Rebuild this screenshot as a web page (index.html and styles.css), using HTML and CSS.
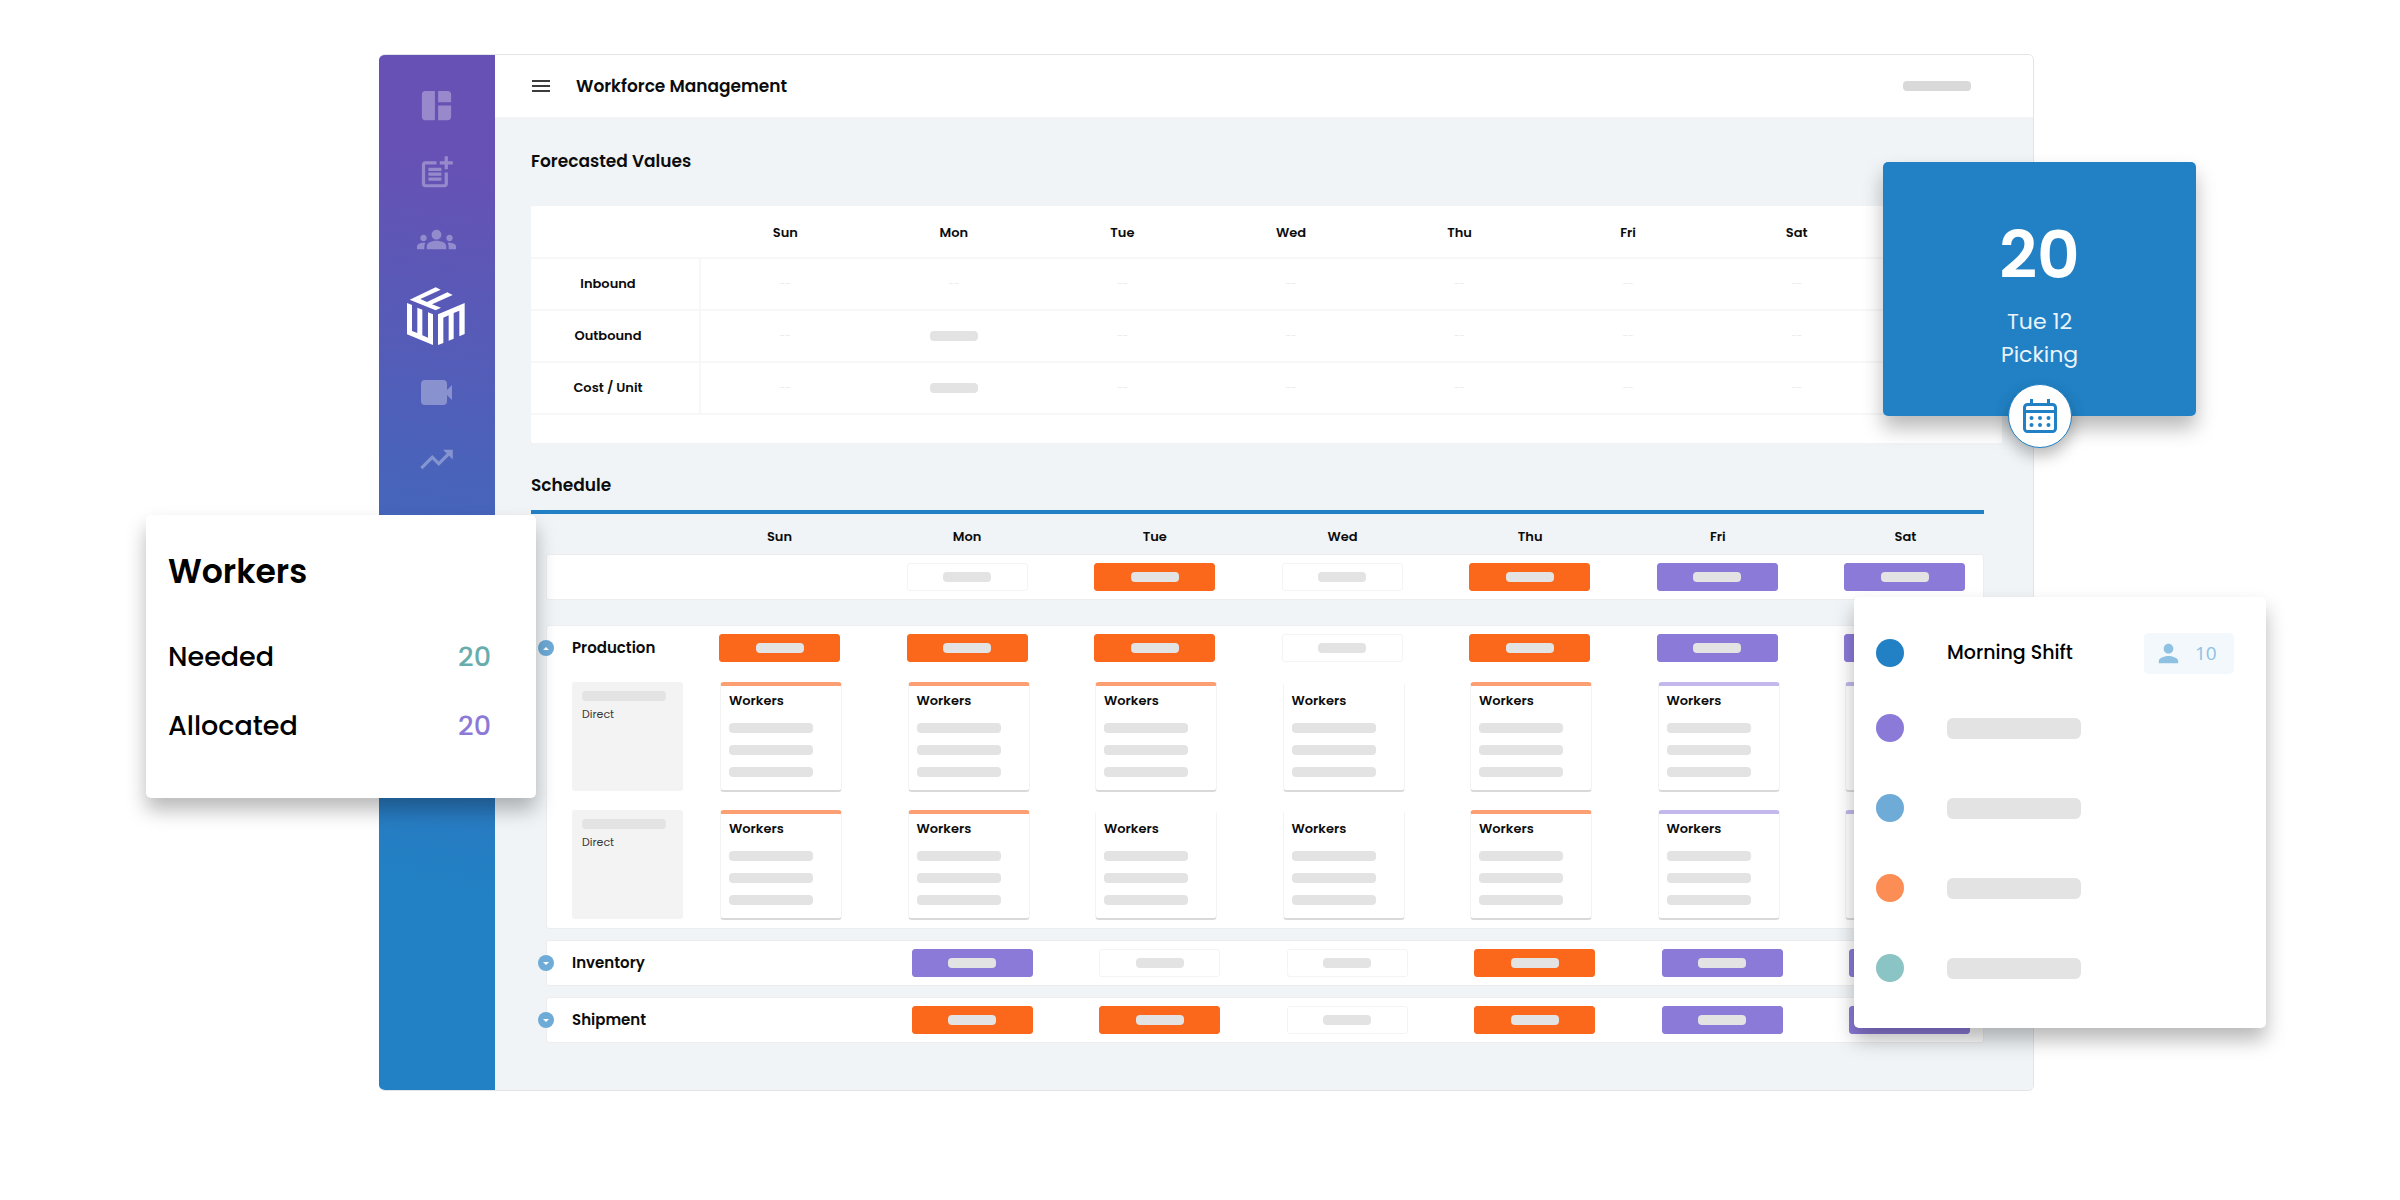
FILE: index.html
```html
<!DOCTYPE html>
<html lang="en">
<head>
<meta charset="utf-8">
<title>Workforce Management</title>
<link rel="stylesheet" href="styles.css">
</head>
<body>
<div class="stage">
  <div class="app">
    <nav class="sidebar" aria-label="Main">
      <a href="#dashboard" aria-label="Dashboard"><svg class="icon" viewBox="0 0 24 24"><path d="M11 21H5c-1.1 0-2-.9-2-2V5c0-1.1.9-2 2-2h6v18zm2 0h6c1.1 0 2-.9 2-2v-7h-8v9zm8-11V5c0-1.1-.9-2-2-2h-6v7h8z"/></svg></a>
      <a href="#new" aria-label="New post"><svg class="icon" viewBox="0 0 24 24"><path d="M17 19.22H5V7h7V5H5c-1.1 0-2 .9-2 2v12c0 1.1.9 2 2 2h12c1.1 0 2-.9 2-2v-7h-2v7.22z M19 2h-2v3h-3v2h3v3h2V7h3V5h-3V2z M7 9h8v2H7z M7 12h8v2H7z M7 15h8v2H7z"/></svg></a>
      <a href="#teams" aria-label="Teams"><svg class="icon" viewBox="0 0 24 24"><path d="M12 12.75c1.63 0 3.07.39 4.24.9 1.08.48 1.76 1.56 1.76 2.73V18H6v-1.61c0-1.18.68-2.26 1.76-2.73 1.17-.52 2.61-.91 4.24-.91zM4 13c1.1 0 2-.9 2-2s-.9-2-2-2-2 .9-2 2 .9 2 2 2zm1.13 1.1c-.37-.06-.74-.1-1.13-.1-.99 0-1.93.21-2.78.58C.48 14.9 0 15.62 0 16.43V18h4.5v-1.61c0-.83.23-1.61.63-2.29zM20 13c1.1 0 2-.9 2-2s-.9-2-2-2-2 .9-2 2 .9 2 2 2zm4 3.43c0-.81-.48-1.53-1.22-1.85-.85-.37-1.79-.58-2.78-.58-.39 0-.76.04-1.13.1.4.68.63 1.46.63 2.29V18H24v-1.57zM12 6c1.66 0 3 1.34 3 3s-1.34 3-3 3-3-1.34-3-3 1.34-3 3-3z"/></svg></a>
      <a href="#wfm" aria-label="Workforce" aria-current="page"><svg class="logo" viewBox="0 0 174 174"><path d="M0 48 15 54V132L31 138V62L46 68V145L63 152V76L78 82V174L0 142Z"/><path d="M93 82 173 48V141L157 148V71L140 78V155L125 161V85L109 92V168L93 174Z"/><path d="M8 38 86 1 101 8 40 36 60 45 121 16 137 24 75 52 102 62 86 70Z"/></svg></a>
      <a href="#video" aria-label="Video"><svg class="icon" viewBox="0 0 39 39"><path d="M8 7h18a4 4 0 0 1 4 4v6l5-5v15l-5-5v6a4 4 0 0 1-4 4H8a4 4 0 0 1-4-4V11a4 4 0 0 1 4-4z"/></svg></a>
      <a href="#trends" aria-label="Trends"><svg class="icon" viewBox="0 0 24 24"><path d="M16 6l2.29 2.29-4.88 4.88-4-4L2 16.59 3.41 18l6-6 4 4 6.3-6.29L22 12V6z"/></svg></a>
    </nav>
    <div class="page">
      <header class="topbar">
        <button class="menu" aria-label="Open menu"><i></i><i></i><i></i></button>
        <h1>Workforce Management</h1>
        <span class="bar account"></span>
      </header>
      <main class="content">
        <h2>Forecasted Values</h2>
        <table class="forecast">
          <colgroup><col class="col-label"><col span="7"><col class="col-end"></colgroup>
          <thead><tr><td></td><th>Sun</th><th>Mon</th><th>Tue</th><th>Wed</th><th>Thu</th><th>Fri</th><th>Sat</th><td></td></tr></thead>
          <tbody>
            <tr><th>Inbound</th><td>--</td><td>--</td><td>--</td><td>--</td><td>--</td><td>--</td><td>--</td><td></td></tr>
            <tr><th>Outbound</th><td>--</td><td><span class="bar"></span></td><td>--</td><td>--</td><td>--</td><td>--</td><td>--</td><td></td></tr>
            <tr><th>Cost / Unit</th><td>--</td><td><span class="bar"></span></td><td>--</td><td>--</td><td>--</td><td>--</td><td>--</td><td></td></tr>
          </tbody>
        </table>

        <section class="schedule">
          <h2>Schedule</h2>
          <div class="row days"><span class="label"></span><div class="cells"><b>Sun</b><b>Mon</b><b>Tue</b><b>Wed</b><b>Thu</b><b>Fri</b><b>Sat</b></div></div>
          <div class="panel summary">
            <div class="row"><span class="label"></span><div class="cells"><span class="pill none"></span><span class="pill"></span><span class="pill orange"></span><span class="pill"></span><span class="pill orange"></span><span class="pill purple"></span><span class="pill purple"></span></div></div>
          </div>

          <div class="panel">
            <button class="toggle open" aria-label="Collapse Production"></button>
            <div class="row"><h3 class="label">Production</h3><div class="cells"><span class="pill orange"></span><span class="pill orange"></span><span class="pill orange"></span><span class="pill"></span><span class="pill orange"></span><span class="pill purple"></span><span class="pill purple"></span></div></div>
            <div class="row crew">
              <div class="label"><div class="type"><span class="bar"></span>Direct</div></div>
              <div class="cells">
                <div class="card orange"><b>Workers</b><i></i><i></i><i></i></div>
                <div class="card orange"><b>Workers</b><i></i><i></i><i></i></div>
                <div class="card orange"><b>Workers</b><i></i><i></i><i></i></div>
                <div class="card"><b>Workers</b><i></i><i></i><i></i></div>
                <div class="card orange"><b>Workers</b><i></i><i></i><i></i></div>
                <div class="card purple"><b>Workers</b><i></i><i></i><i></i></div>
                <div class="card purple"><b>Workers</b><i></i><i></i><i></i></div>
              </div>
            </div>
            <div class="row crew">
              <div class="label"><div class="type"><span class="bar"></span>Direct</div></div>
              <div class="cells">
                <div class="card orange"><b>Workers</b><i></i><i></i><i></i></div>
                <div class="card orange"><b>Workers</b><i></i><i></i><i></i></div>
                <div class="card"><b>Workers</b><i></i><i></i><i></i></div>
                <div class="card"><b>Workers</b><i></i><i></i><i></i></div>
                <div class="card orange"><b>Workers</b><i></i><i></i><i></i></div>
                <div class="card purple"><b>Workers</b><i></i><i></i><i></i></div>
                <div class="card purple"><b>Workers</b><i></i><i></i><i></i></div>
              </div>
            </div>
          </div>

          <div class="panel">
            <button class="toggle" aria-label="Expand Inventory"></button>
            <div class="row closed"><h3 class="label">Inventory</h3><div class="cells"><span class="pill none"></span><span class="pill purple"></span><span class="pill"></span><span class="pill"></span><span class="pill orange"></span><span class="pill purple"></span><span class="pill purple"></span></div></div>
          </div>
          <div class="panel">
            <button class="toggle" aria-label="Expand Shipment"></button>
            <div class="row closed"><h3 class="label">Shipment</h3><div class="cells"><span class="pill none"></span><span class="pill orange"></span><span class="pill orange"></span><span class="pill"></span><span class="pill orange"></span><span class="pill purple"></span><span class="pill purple"></span></div></div>
          </div>
        </section>
      </main>
    </div>
  </div>

  <aside class="float workers">
    <h2>Workers</h2>
    <dl>
      <div><dt>Needed</dt><dd class="teal">20</dd></div>
      <div><dt>Allocated</dt><dd class="violet">20</dd></div>
    </dl>
  </aside>

  <aside class="float picking">
    <strong>20</strong>
    <p>Tue 12</p>
    <p>Picking</p>
    <button class="calendar" aria-label="Open calendar"><svg viewBox="0 0 34 34"><path fill="none" stroke="currentColor" stroke-width="3" d="M4.500 5.500h25a3 3 0 0 1 3 3v21a3 3 0 0 1-3 3h-25a3 3 0 0 1-3-3v-21a3 3 0 0 1 3-3z"/><path fill="currentColor" d="M2 11h30v3H2zM7 0h3v7H7zM24 0h3v7h-3z"/><g fill="currentColor"><circle cx="8.500" cy="19" r="2"/><circle cx="17" cy="19" r="2"/><circle cx="25.500" cy="19" r="2"/><circle cx="8.500" cy="26" r="2"/><circle cx="17" cy="26" r="2"/><circle cx="25.500" cy="26" r="2"/></g></svg></button>
  </aside>

  <aside class="float shifts">
    <div class="shift"><span class="dot blue"></span><span class="name">Morning Shift</span><span class="badge"><svg viewBox="0 0 24 24"><path d="M12 12c2.210 0 4-1.790 4-4s-1.790-4-4-4-4 1.790-4 4 1.790 4 4 4zm0 2c-2.670 0-8 1.340-8 4v2h16v-2c0-2.660-5.330-4-8-4z"/></svg>10</span></div>
    <div class="shift"><span class="dot purple"></span><span class="line"></span></div>
    <div class="shift"><span class="dot sky"></span><span class="line"></span></div>
    <div class="shift"><span class="dot orange"></span><span class="line"></span></div>
    <div class="shift"><span class="dot teal"></span><span class="line"></span></div>
  </aside>
</div>
</body>
</html>
```
FILE: styles.css
```css
:root {
  --blue: #2181c4;
  --orange: #fb671b;
  --purple: #8c7ad8;
  --skeleton: #e3e3e3;
  --surface: #f0f4f7;
}

* { box-sizing: border-box; }

body {
  margin: 0;
  background: #fff;
  color: #0c0c0c;
  font: 600 13px/20px Poppins, Inter, "Open Sans", sans-serif;
}

h1, h2, h3, p, dl, dd { margin: 0; }
h1, h2, h3, b { font-weight: 600; }

button {
  padding: 0;
  border: 0;
  background: none;
  cursor: pointer;
}

.stage {
  position: relative;
  padding: 54px 366px 110px 379px;
}

.app {
  display: flex;
  border: 1px solid #e2e5e7;
  border-left: 0;
  border-radius: 6px;
  overflow: hidden;
}

/* Sidebar */
.sidebar {
  display: flex;
  flex-direction: column;
  align-items: center;
  gap: 28px;
  flex: none;
  width: 116px;
  padding: 31px 2px 0 0;
  background: linear-gradient(190deg, #6751b4 10%, #4665bb 44%, #2181c4 80%);
}

.sidebar a { display: block; }
.sidebar svg { display: block; fill: #fff; }
.icon { width: 39px; height: 39px; opacity: .32; }
.logo { width: 58px; height: 58px; }

/* Top bar */
.page { flex: 1; min-width: 0; background: var(--surface); }

.topbar {
  display: flex;
  align-items: center;
  height: 62px;
  padding: 0 62px 0 37px;
  background: #fff;
}

.menu { display: grid; gap: 3px; width: 18px; margin-right: 26px; }
.menu i { height: 2px; background: #3c3c3c; }

h1, h2 { font-size: 17px; line-height: 28px; }

.bar {
  display: inline-block;
  width: 48px;
  height: 10px;
  border-radius: 4px;
  background: var(--skeleton);
  vertical-align: middle;
}

.account { width: 68px; margin-left: auto; background: #d9d9d9; }

/* Forecast */
.content { padding: 30px 31px 36px 36px; }

.forecast {
  width: 100%;
  margin: 31px 0 28px;
  padding-bottom: 28px;
  border-spacing: 0;
  table-layout: fixed;
  background: #fff;
  border-radius: 2px;
}

.col-label { width: 170px; }
.col-end { width: 121px; }

.forecast th, .forecast td {
  height: 52px;
  padding: 0;
  border-bottom: 2px solid #f7f7f7;
  font-weight: 600;
  text-align: center;
}

.forecast thead th { height: 53px; padding-top: 2px; }
.forecast td { color: #ebebeb; font-size: 10px; font-weight: 400; }
.forecast tbody th { padding-right: 14px; border-right: 2px solid #f7f7f7; }

/* Schedule */
.schedule { margin-right: 18px; }
.schedule h2 { padding-bottom: 11px; border-bottom: 4px solid var(--blue); box-sizing: content-box; }

.row { display: flex; padding: 0 18px 0 25px; }
.label { flex: none; width: 147px; }
.cells { display: flex; flex: 1; justify-content: space-between; }
.days { height: 40px; margin-left: 16px; padding-top: 13px; }
.days b { width: 121px; text-align: center; }

.panel {
  position: relative;
  margin: 0 0 11px 15px;
  padding: 8px 0 8px;
  border: 1px solid #ebedee;
  border-radius: 3px;
  background: #fff;
}

.summary { margin-bottom: 25px; }
h3 { font-size: 15px; line-height: 28px; }

.pill {
  display: grid;
  place-items: center;
  width: 121px;
  height: 28px;
  border: 1px solid #f4f4f4;
  border-radius: 3px;
}

.pill::before {
  content: "";
  width: 48px;
  height: 10px;
  border-radius: 4px;
  background: var(--skeleton);
}

.pill.orange { border-color: var(--orange); background: var(--orange); }
.pill.purple { border-color: var(--purple); background: var(--purple); }
.pill.none { visibility: hidden; }

.toggle {
  position: absolute;
  left: -9px;
  top: 14px;
  display: grid;
  place-items: center;
  width: 16px;
  height: 16px;
  border-radius: 50%;
  background: #6eabd7;
}

.toggle::before {
  content: "";
  border: 3px solid transparent;
  border-top-color: #fff;
  border-bottom: 0;
}

.toggle.open::before { transform: rotate(180deg); }

.crew { margin-top: 20px; padding-right: 16px; }
.crew + .crew { margin-top: 18px; }
.crew .label { width: 148px; }

.closed { padding-right: 13px; }
.closed .label { width: 152px; }

.type {
  display: grid;
  gap: 3px;
  align-content: start;
  width: 111px;
  height: 109px;
  padding: 9px 10px;
  border-radius: 3px;
  background: #f3f3f3;
  color: #3a3a3a;
  font-size: 11px;
  font-weight: 400;
}

.type .bar { width: 84px; }

.card {
  display: flex;
  flex-direction: column;
  gap: 12px;
  width: 122px;
  height: 110px;
  padding: 5px 8px;
  border: 1px solid #f3f3f3;
  border-top: 4px solid transparent;
  border-bottom: 2px solid #d9d9d9;
  border-radius: 4px;
}

.card.orange { border-top-color: #fb9e72; }
.card.purple { border-top-color: #c2b8eb; }
.card i { flex: none; width: 84px; height: 10px; border-radius: 4px; background: var(--skeleton); }

/* Floating cards */
.float {
  position: absolute;
  border-radius: 5px;
  background: #fff;
  box-shadow: 0 12px 20px rgba(0, 0, 0, .28);
}

.workers {
  left: 146px;
  top: 515px;
  width: 390px;
  padding: 37px 45px 52px 22px;
  color: #000;
}

.workers h2 { font-size: 33px; line-height: 40px; }
.workers dl { display: grid; gap: 29px; margin-top: 45px; font-size: 27px; line-height: 40px; font-weight: 500; }
.workers dl div { display: flex; justify-content: space-between; }
dd.teal { color: #68adac; }
dd.violet { color: #8c7ad8; }

.picking {
  right: 204px;
  top: 162px;
  width: 313px;
  height: 254px;
  padding-top: 53px;
  background: var(--blue);
  color: #fff;
  font-size: 22px;
  line-height: 33px;
  text-align: center;
}

.picking strong { display: block; margin-bottom: 10px; font-size: 66px; line-height: 80px; font-weight: 600; }
.picking p { font-weight: 400; color: #e9f3fa; }

.calendar {
  position: absolute;
  left: 125px;
  bottom: -32px;
  display: grid;
  place-items: center;
  width: 64px;
  height: 64px;
  border: 1px solid var(--blue);
  border-radius: 50%;
  background: #fff;
  color: var(--blue);
  box-shadow: 0 8px 16px rgba(0, 0, 0, .28);
}

.calendar svg { width: 34px; height: 34px; }

.shifts {
  right: 134px;
  top: 597px;
  display: grid;
  gap: 52px;
  width: 412px;
  padding: 42px 32px 46px 22px;
  color: #000;
}

.shift { display: flex; align-items: center; height: 28px; font-size: 19px; font-weight: 500; }
.shift:first-child { margin-bottom: -5px; }
.dot { width: 28px; height: 28px; margin-right: 43px; border-radius: 50%; }
.dot.blue { background: var(--blue); }
.dot.purple { background: var(--purple); }
.dot.sky { background: #6eabd7; }
.dot.orange { background: #fc8e55; }
.dot.teal { background: #8bc4c5; }
.line { width: 134px; height: 21px; border-radius: 6px; background: var(--skeleton); }

.badge {
  display: flex;
  align-items: center;
  gap: 12px;
  width: 90px;
  height: 41px;
  margin-left: auto;
  padding-left: 10px;
  border-radius: 5px;
  background: #f2f8fc;
  color: #8fc1e3;
  font-family: "Open Sans", sans-serif;
  font-weight: 400;
}

.badge svg { width: 29px; height: 29px; fill: currentColor; }
```
